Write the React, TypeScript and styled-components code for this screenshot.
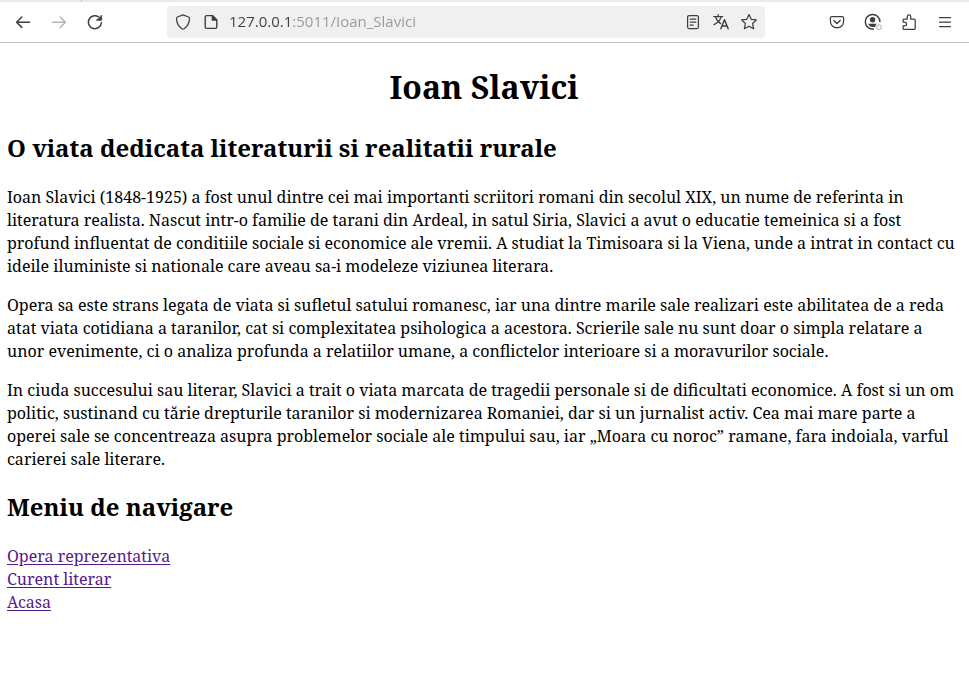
import React, { useState } from 'react';
import styled, { createGlobalStyle } from 'styled-components';

const GlobalStyle = createGlobalStyle`
  body {
    margin: 0;
    background: #ffffff;
    color: #000000;
    font-family: "Noto Serif", "DejaVu Serif Condensed", serif;
    font-size: 16px;
    line-height: 23px;
  }
`;

const TabStrip = styled.div`
  display: flex;
  height: 2px;
  background: #eaeaea;
`;

const TabEdge = styled.div`
  width: 82px;
  box-sizing: border-box;
  border-right: 1px solid #c4c4c4;
`;

const Toolbar = styled.header`
  display: flex;
  align-items: center;
  gap: 60px;
  height: 40px;
  padding: 0 12px 0 11px;
  border-bottom: 1px solid #c2c2c2;
`;

const ButtonGroup = styled.div`
  display: flex;
  gap: 12px;
`;

const IconButton = styled.button<{ $compact?: boolean }>`
  display: grid;
  place-items: center;
  width: ${({ $compact }) => ($compact ? 28 : 24)}px;
  height: 28px;
  padding: 0;
  border: 0;
  border-radius: 4px;
  background: transparent;
  color: #3e3e42;

  &:disabled {
    color: #b4b4b6;
  }
`;

const AddressBar = styled.form`
  display: flex;
  flex: 1;
  align-items: center;
  min-width: 0;
  height: 32px;
  padding: 0 2px;
  box-sizing: border-box;
  border-radius: 4px;
  background: #f0f0f0;
`;

const AddressInput = styled.input`
  flex: 1;
  min-width: 0;
  height: 28px;
  box-sizing: border-box;
  padding: 0 0 2px;
  margin: 0 4px;
  border: 0;
  outline: 0;
  font: 15px "Open Sans", "Noto Sans", sans-serif;
  color: #3e3e42;
  background: linear-gradient(to right, #3e3e42 63px, #98989a 63px);
  background-clip: text;
  -webkit-text-fill-color: transparent;
`;

const Article = styled.main`
  padding: 1px 8px 16px 7px;
`;

const Title = styled.h1`
  margin: 21px 0 22px;
  font-size: 32px;
  line-height: 44px;
  text-align: center;
`;

const Heading = styled.h2`
  margin: 19px 0 21px;
  font-size: 24px;
  line-height: 34px;
`;

const Paragraph = styled.p`
  margin: 16px 0;
`;

const LinkList = styled.nav`
  display: flex;
  flex-direction: column;
  align-items: flex-start;
`;

const PageLink = styled.a`
  color: #551a8b;
  text-underline-offset: 2px;
`;

const Svg = ({ children }: { children: React.ReactNode }) => (
  <svg
    width="16"
    height="16"
    viewBox="0 0 16 16"
    fill="none"
    stroke="currentColor"
    strokeWidth="1.25"
    strokeLinecap="round"
    strokeLinejoin="round"
    aria-hidden="true"
  >
    {children}
  </svg>
);

const BackIcon = () => (
  <Svg>
    <path d="M14.5 8.2H2M6.8 3 1.6 8.2l5.2 5.2" strokeWidth="1.5" />
  </Svg>
);

const ForwardIcon = () => (
  <Svg>
    <path d="M1.5 8.2H14M9.2 3l5.2 5.2-5.2 5.2" strokeWidth="1.4" />
  </Svg>
);

const ReloadIcon = () => (
  <Svg>
    <path d="M11.3 2.6A6.5 6.5 0 1 0 14.4 8.8" strokeWidth="1.5" />
    <path d="M14.6 1.4v4.9H9.7z" fill="currentColor" strokeWidth="0.8" />
  </Svg>
);

const ShieldIcon = () => (
  <Svg>
    <path d="M8 .9 13.6 3c.6.2.9.7.9 1.3-.1 4.7-2.2 8.4-5.4 10.4-.7.4-1.5.4-2.2 0C3.7 12.7 1.6 9 1.5 4.3c0-.6.3-1.1.9-1.3z" />
  </Svg>
);

const PageIcon = () => (
  <Svg>
    <path d="M9.500 1.600H3.600c-.8 0-1.400.6-1.400 1.400v10c0 .8.6 1.400 1.400 1.400h8.800c.8 0 1.400-.6 1.400-1.400V6z" strokeWidth="1.4" />
    <path d="M9.300 1.600V6h4.400z" fill="currentColor" />
  </Svg>
);

const ReaderIcon = () => (
  <Svg>
    <rect x="2.600" y="1.600" width="10.800" height="13" rx="1.500" />
    <path d="M5.200 5h5.600M5.200 8h5.600M5.200 11h3" />
  </Svg>
);

const TranslateIcon = () => (
  <Svg>
    <path d="M.7 2.500h9M5.200.6v1.900M8.200 2.700C7.300 6.400 4.600 9 1 10.600M2.600 2.900c.8 3 2.600 5.300 5 6.700" />
    <path d="M7.800 14.700l3.700-9 3.700 9M9 12h5" strokeWidth="1.4" />
  </Svg>
);

const StarIcon = () => (
  <Svg>
    <path d="M8 .6l2.200 4.700 5.200.6-3.800 3.600 1 5.200L8 12.200l-4.600 2.500 1-5.200L.6 5.900l5.200-.6z" />
  </Svg>
);

const PocketIcon = () => (
  <Svg>
    <path d="M2.800 2.500h10.400c.8 0 1.400.6 1.400 1.400v3.400a6.600 6.600 0 0 1-13.200 0V3.900c0-.8.6-1.400 1.400-1.400z" />
    <path d="M4.800 6.400 8 9.500l3.200-3.100" strokeWidth="1.4" />
  </Svg>
);

const AccountIcon = () => (
  <svg width="18" height="18" viewBox="0 0 18 18" fill="none" aria-hidden="true">
    <path d="M10 15.900A7.300 7.300 0 1 1 15.900 8.900" stroke="currentColor" strokeWidth="1.5" />
    <circle cx="8.600" cy="6.800" r="2.700" fill="currentColor" />
    <path d="M4.400 10.800h8.400l-1.400 1.600v1.700H8.400c-2.200 0-3.800-1.400-4-3.300z" fill="currentColor" />
    <circle cx="15" cy="14.200" r="2.400" stroke="#a8a8aa" />
  </svg>
);

const PuzzleIcon = () => (
  <Svg>
    <path d="M2.100 8V6c0-.6.4-1 1-1h3.200V2.600a1.700 1.700 0 0 1 3.400 0V5h3.500c.6 0 1 .4 1 1v8.400c0 .6-.4 1-1 1H3.100c-.6 0-1-.4-1-1v-2.600h1.600a1.900 1.900 0 0 0 0-3.800z" />
  </Svg>
);

const MenuIcon = () => (
  <Svg>
    <path d="M2.500 3.500h11M2.500 8h11M2.500 12.500h11" />
  </Svg>
);

const paragraphs = [
  'Ioan Slavici (1848-1925) a fost unul dintre cei mai importanti scriitori romani din secolul XIX, un nume de referinta in literatura realista. Nascut intr-o familie de tarani din Ardeal, in satul Siria, Slavici a avut o educatie temeinica si a fost profund influentat de conditiile sociale si economice ale vremii. A studiat la Timisoara si la Viena, unde a intrat in contact cu ideile iluministe si nationale care aveau sa-i modeleze viziunea literara.',
  'Opera sa este strans legata de viata si sufletul satului romanesc, iar una dintre marile sale realizari este abilitatea de a reda atat viata cotidiana a taranilor, cat si complexitatea psihologica a acestora. Scrierile sale nu sunt doar o simpla relatare a unor evenimente, ci o analiza profunda a relatiilor umane, a conflictelor interioare si a moravurilor sociale.',
  'In ciuda succesului sau literar, Slavici a trait o viata marcata de tragedii personale si de dificultati economice. A fost si un om politic, sustinand cu tărie drepturile taranilor si modernizarea Romaniei, dar si un jurnalist activ. Cea mai mare parte a operei sale se concentreaza asupra problemelor sociale ale timpului sau, iar „Moara cu noroc” ramane, fara indoiala, varful carierei sale literare.',
];

const links = ['Opera reprezentativa', 'Curent literar', 'Acasa'];

export default function App() {
  const [address, setAddress] = useState('127.0.0.1:5011/Ioan_Slavici');

  return (
    <>
      <GlobalStyle />
      <TabStrip>
        <TabEdge />
      </TabStrip>
      <Toolbar>
        <ButtonGroup>
          <IconButton type="button" aria-label="Back"><BackIcon /></IconButton>
          <IconButton type="button" aria-label="Forward" disabled><ForwardIcon /></IconButton>
          <IconButton type="button" aria-label="Reload"><ReloadIcon /></IconButton>
        </ButtonGroup>
        <AddressBar onSubmit={(event) => event.preventDefault()}>
          <IconButton $compact type="button" aria-label="Tracking protection"><ShieldIcon /></IconButton>
          <IconButton $compact type="button" aria-label="Site information"><PageIcon /></IconButton>
          <AddressInput
            aria-label="Address"
            value={address}
            spellCheck={false}
            onChange={(event) => setAddress(event.target.value)}
          />
          <IconButton $compact type="button" aria-label="Reader view"><ReaderIcon /></IconButton>
          <IconButton $compact type="button" aria-label="Translate page"><TranslateIcon /></IconButton>
          <IconButton $compact type="button" aria-label="Bookmark"><StarIcon /></IconButton>
        </AddressBar>
        <ButtonGroup>
          <IconButton type="button" aria-label="Save to Pocket"><PocketIcon /></IconButton>
          <IconButton type="button" aria-label="Account"><AccountIcon /></IconButton>
          <IconButton type="button" aria-label="Extensions"><PuzzleIcon /></IconButton>
          <IconButton type="button" aria-label="Menu"><MenuIcon /></IconButton>
        </ButtonGroup>
      </Toolbar>
      <Article>
        <Title>Ioan Slavici</Title>
        <Heading>O viata dedicata literaturii si realitatii rurale</Heading>
        {paragraphs.map((text) => (
          <Paragraph key={text}>{text}</Paragraph>
        ))}
        <Heading>Meniu de navigare</Heading>
        <LinkList aria-label="Meniu de navigare">
          {links.map((label) => (
            <PageLink key={label} href="#">{label}</PageLink>
          ))}
        </LinkList>
      </Article>
    </>
  );
}
